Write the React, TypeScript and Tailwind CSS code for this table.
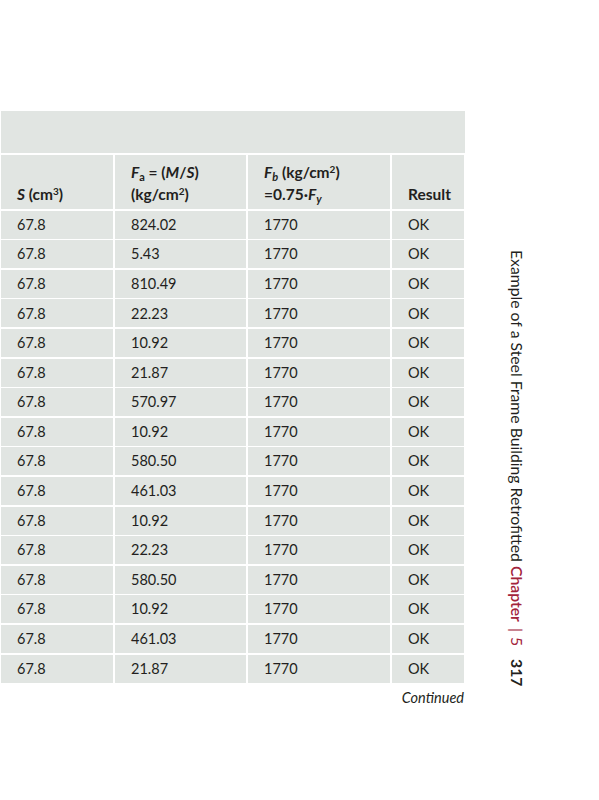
// Steel frame retrofit table page — bending stress check, continued.

const rows: Array<[string, string, string, string]> = [
  ["67.8", "824.02", "1770", "OK"],
  ["67.8", "5.43", "1770", "OK"],
  ["67.8", "810.49", "1770", "OK"],
  ["67.8", "22.23", "1770", "OK"],
  ["67.8", "10.92", "1770", "OK"],
  ["67.8", "21.87", "1770", "OK"],
  ["67.8", "570.97", "1770", "OK"],
  ["67.8", "10.92", "1770", "OK"],
  ["67.8", "580.50", "1770", "OK"],
  ["67.8", "461.03", "1770", "OK"],
  ["67.8", "10.92", "1770", "OK"],
  ["67.8", "22.23", "1770", "OK"],
  ["67.8", "580.50", "1770", "OK"],
  ["67.8", "10.92", "1770", "OK"],
  ["67.8", "461.03", "1770", "OK"],
  ["67.8", "21.87", "1770", "OK"],
];

const cell = "bg-[#e1e5e2] pl-[16px]";
const head = "bg-[#e1e5e2] pl-[16px] pb-[4px] flex flex-col justify-end text-[15.5px] leading-[22px] font-bold";
const vert = "[writing-mode:vertical-rl] whitespace-nowrap leading-[18px]";

export default function App() {
  return (
    <div className="flex h-[800px] w-[599px] bg-white pt-[111px] text-[#231f20] font-['Lato','Open_Sans',sans-serif]">
      <div className="w-[465px] pl-px flex flex-col">
        <div className="h-[42px] bg-[#e1e5e2]" />
        <div className="mt-[2px] grid grid-cols-[112px_131px_142px_72px] gap-x-[2px] gap-y-[1.6px] text-[14.5px]">
          <div className={`${head} h-[54px]`}>
            <div>
              <i>S</i> (cm<sup className="text-[10px]">3</sup>)
            </div>
          </div>
          <div className={head}>
            <div>
              <i>F</i>
              <sub className="text-[11px]">a</sub> = (<i>M</i>/<i>S</i>)
            </div>
            <div>
              (kg/cm<sup className="text-[10px]">2</sup>)
            </div>
          </div>
          <div className={head}>
            <div>
              <i>F</i>
              <sub className="text-[11px] italic">b</sub> (kg/cm<sup className="text-[10px]">2</sup>)
            </div>
            <div>
              =0.75·<i>F</i>
              <sub className="text-[11px] italic">y</sub>
            </div>
          </div>
          <div className={head}>
            <div>Result</div>
          </div>
          {rows.map((r, i) =>
            r.map((v, j) => (
              <div key={`${i}-${j}`} className={`${cell} h-[28px] flex items-center`}>
                {v}
              </div>
            ))
          )}
        </div>
        <div className="mt-[4px] text-right text-[14.5px] italic pr-px">Continued</div>
      </div>
      {/* running head, read top to bottom */}
      <div className="ml-[43px] mt-[139px] flex flex-col items-center self-start text-[15.75px]">
        <span className={vert}>Example of a Steel Frame Building Retrofitted</span>
        <span className={`${vert} mt-[4px] text-[#a3243b] font-semibold`}>Chapter</span>
        <span className={`${vert} mt-[6px] text-[#a3243b]`}>|</span>
        <span className={`${vert} mt-[5px] text-[#a3243b]`}>5</span>
        <span className={`${vert} mt-[13px] font-bold`}>317</span>
      </div>
    </div>
  );
}
